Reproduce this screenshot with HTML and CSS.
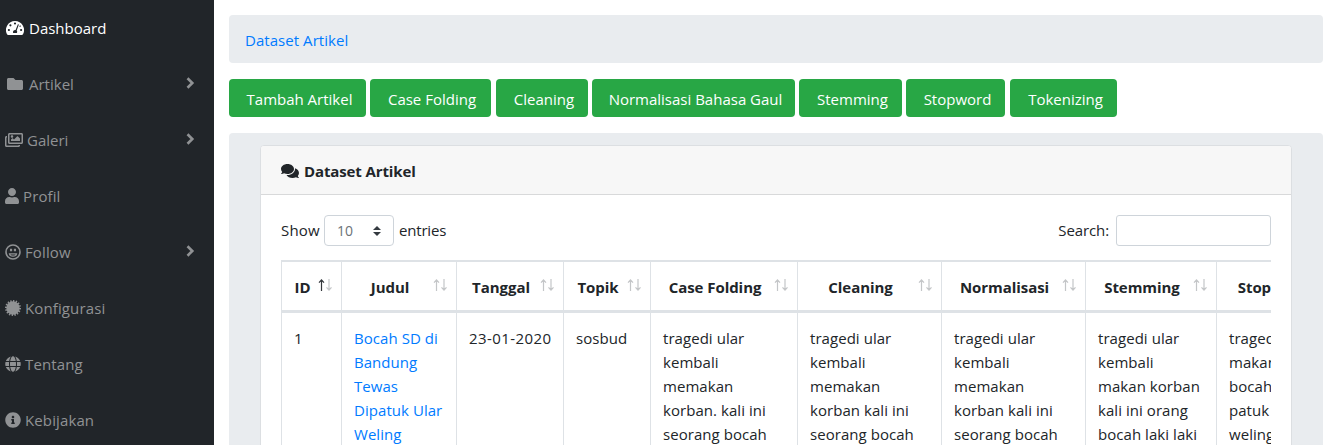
FILE: index.html
```html
<!DOCTYPE html>
<html lang="id">
<head>
<meta charset="utf-8">
<title>Dataset Artikel</title>
<link rel="stylesheet" href="styles.css">
</head>
<body>
<div class="layout">
  <nav class="sidebar">
    <a class="nav-item active"><svg class="ic-dash" width="18" height="16" viewBox="0 0 18 16"><path fill-rule="evenodd" d="M9 1a9 9 0 0 0-7.800 13.500c.2.3.5.5.9.5h13.800c.4 0 .7-.2.9-.5A9 9 0 0 0 9 1zM9 2.400a1.100 1.100 0 1 1 0 2.200 1.100 1.100 0 0 1 0-2.200zM4.400 4.200a1.100 1.100 0 1 1 0 2.200 1.100 1.100 0 0 1 0-2.200zM2.900 8.900a1.100 1.100 0 1 1 0 2.200 1.100 1.100 0 0 1 0-2.200zM15.100 8.900a1.100 1.100 0 1 1 0 2.200 1.100 1.100 0 0 1 0-2.200zM11.900 4.200l1 .4-2.200 5.900a2.200 2.200 0 0 1 .1 2.600H7.200a2.200 2.200 0 0 1 2.400-3.100zM13.900 5.300a1 1 0 0 1 .3 1.700l-.8-.1z"/></svg><span>Dashboard</span></a>
    <a class="nav-item"><svg class="ic-folder" width="16" height="16" viewBox="0 0 512 512"><path d="M464 128H272l-64-64H48C21.490 64 0 85.490 0 112v288c0 26.510 21.490 48 48 48h416c26.510 0 48-21.490 48-48V176c0-26.510-21.490-48-48-48z"/></svg><span>Artikel</span><svg class="chev" width="9" height="12" viewBox="0 0 9 12"><path d="M1.500 1.300L6.300 6l-4.800 4.700"/></svg></a>
    <a class="nav-item"><svg width="18" height="16" viewBox="0 0 576 512"><path d="M480 416v16c0 26.510-21.490 48-48 48H48c-26.510 0-48-21.490-48-48V176c0-26.510 21.490-48 48-48h16v48H54a6 6 0 0 0-6 6v244a6 6 0 0 0 6 6h372a6 6 0 0 0 6-6v-10h48zm42-336H150a6 6 0 0 0-6 6v244a6 6 0 0 0 6 6h372a6 6 0 0 0 6-6V86a6 6 0 0 0-6-6zm6-48c26.510 0 48 21.490 48 48v256c0 26.510-21.490 48-48 48H144c-26.510 0-48-21.490-48-48V80c0-26.510 21.490-48 48-48h384zM264 144c0 22.091-17.909 40-40 40s-40-17.909-40-40 17.909-40 40-40 40 17.909 40 40zm-72 96l39.515-39.515c4.686-4.686 12.284-4.686 16.971 0L288 240l103.515-103.515c4.686-4.686 12.284-4.686 16.971 0L480 208v80H192v-48z"/></svg><span>Galeri</span><svg class="chev" width="9" height="12" viewBox="0 0 9 12"><path d="M1.500 1.300L6.300 6l-4.800 4.700"/></svg></a>
    <a class="nav-item"><svg width="14" height="16" viewBox="0 0 448 512"><path d="M224 256c70.700 0 128-57.300 128-128S294.700 0 224 0 96 57.300 96 128s57.300 128 128 128zm89.600 32h-16.700c-22.200 10.200-46.900 16-72.900 16s-50.600-5.800-72.900-16h-16.700C60.200 288 0 348.200 0 422.400V464c0 26.500 21.500 48 48 48h352c26.500 0 48-21.500 48-48v-41.600c0-74.200-60.200-134.400-134.400-134.400z"/></svg><span class="spaced">Profil</span></a>
    <a class="nav-item"><svg class="ic-smile" width="16" height="16" viewBox="0 0 16 16"><circle cx="8" cy="8" r="7"/><path d="M5.500 4.700v2.600M6.600 4.700v2.600M9.400 4.700v2.600M10.500 4.700v2.600M4.400 9.900h7.200c-.5 3-6.700 3-7.200 0z"/></svg><span class="spaced">Follow</span><svg class="chev" width="9" height="12" viewBox="0 0 9 12"><path d="M1.500 1.300L6.300 6l-4.800 4.700"/></svg></a>
    <a class="nav-item"><svg class="ic-cert" width="16" height="16" viewBox="0 0 16 16"><circle cx="8" cy="8" r="6.700"/><circle class="teeth" cx="8" cy="8" r="7" pathLength="32"/></svg><span class="spaced">Konfigurasi</span></a>
    <a class="nav-item"><svg class="ic-globe" width="16" height="16" viewBox="0 0 496 512"><path d="M336.500 160C322 70.700 287.800 8 248 8s-74 62.700-88.500 152h177zM152 256c0 22.200 1.200 43.500 3.300 64h185.300c2.100-20.500 3.300-41.800 3.300-64s-1.200-43.500-3.300-64H155.300c-2.100 20.500-3.300 41.800-3.300 64zm324.700-96c-28.600-67.900-86.500-120.400-158-141.600 24.400 33.800 41.200 84.700 50 141.600h108zM177.200 18.400C105.800 39.600 47.800 92.100 19.300 160h108c8.700-56.900 25.500-107.800 49.900-141.600zM487.400 192H372.700c2.100 21 3.300 42.500 3.300 64s-1.200 43-3.300 64h114.600c5.500-20.500 8.600-41.800 8.600-64s-3.100-43.500-8.500-64zM120 256c0-21.500 1.200-43 3.300-64H8.600C3.200 212.500 0 233.800 0 256s3.200 43.500 8.600 64h114.600c-2-21-3.200-42.500-3.200-64zm39.500 96c14.500 89.300 48.700 152 88.500 152s74-62.700 88.500-152h-177zm159.300 141.600c71.400-21.200 129.400-73.700 158-141.600h-108c-8.800 56.900-25.600 107.800-50 141.600zM19.300 352c28.600 67.900 86.500 120.400 158 141.600-24.400-33.800-41.200-84.700-50-141.600h-108z"/></svg><span class="spaced">Tentang</span></a>
    <a class="nav-item"><svg width="16" height="16" viewBox="0 0 512 512"><path d="M256 8C119.043 8 8 119.083 8 256c0 136.997 111.043 248 248 248s248-111.003 248-248C504 119.083 392.957 8 256 8zm0 110c23.196 0 42 18.804 42 42s-18.804 42-42 42-42-18.804-42-42 18.804-42 42-42zm56 254c0 6.627-5.373 12-12 12h-88c-6.627 0-12-5.373-12-12v-24c0-6.627 5.373-12 12-12h12v-64h-12c-6.627 0-12-5.373-12-12v-24c0-6.627 5.373-12 12-12h64c6.627 0 12 5.373 12 12v100h12c6.627 0 12 5.373 12 12v24z"/></svg><span class="spaced">Kebijakan</span></a>
  </nav>
  <main class="content">
    <div class="breadcrumb"><a>Dataset Artikel</a></div>
    <div class="actions">
      <button class="btn w-tambah">Tambah Artikel</button>
      <button class="btn w-case">Case Folding</button>
      <button class="btn w-clean">Cleaning</button>
      <button class="btn w-normal">Normalisasi Bahasa Gaul</button>
      <button class="btn w-stem">Stemming</button>
      <button class="btn w-stop">Stopword</button>
      <button class="btn w-token">Tokenizing</button>
    </div>
    <div class="panel">
      <section class="card">
        <header class="card-header"><svg width="18" height="16" viewBox="0 0 576 512"><path d="M416 192c0-88.400-93.100-160-208-160S0 103.600 0 192c0 34.300 14.100 65.900 38 92-13.400 30.200-35.500 54.200-35.800 54.500-2.200 2.300-2.800 5.700-1.500 8.700S4.800 352 8 352c36.600 0 66.900-12.300 88.700-25 32.200 15.700 70.300 25 111.300 25 114.900 0 208-71.600 208-160zm122 220c23.900-26 38-57.700 38-92 0-66.900-53.500-124.200-129.300-148.100.9 6.600 1.300 13.300 1.300 20.100 0 105.900-107.700 192-240 192-10.800 0-21.300-.8-31.700-1.900C207.800 439.600 281.800 480 368 480c41 0 79.100-9.200 111.300-25 21.800 12.700 52.100 25 88.700 25 3.200 0 6.100-1.900 7.300-4.800 1.300-2.900.7-6.300-1.500-8.700-.3-.3-22.400-24.200-35.800-54.500z"/></svg><span>Dataset Artikel</span></header>
        <div class="card-body">
          <div class="controls">
            <span class="show">Show</span>
            <div class="select"><span>10</span><svg width="8" height="10" viewBox="0 0 8 10"><path d="M4 0L0 4h8zM4 10L0 6h8z"/></svg></div>
            <span class="entries">entries</span>
            <label class="search" for="search">Search:</label>
            <input id="search" class="search-input" type="text">
          </div>
          <div class="table-wrap">
            <table>
              <colgroup><col class="c-id"><col class="c-judul"><col class="c-tanggal"><col class="c-topik"><col class="c-case"><col class="c-text"><col class="c-text"><col class="c-stem"><col class="c-stop"></colgroup>
              <thead><tr>
                <th><div class="head"><span>ID</span><svg class="sort asc" viewBox="0 0 14 12"><path class="up" d="M3.500 12V1M1 3.700L3.500 1 6 3.700"/><path d="M11 0v11M8.500 8.300L11 11l2.500-2.700"/></svg></div></th>
                <th><div class="head"><span>Judul</span><svg class="sort" viewBox="0 0 14 12"><path d="M3.500 12V1M1 3.700L3.500 1 6 3.700M11 0v11M8.500 8.300L11 11l2.500-2.700"/></svg></div></th>
                <th><div class="head"><span>Tanggal</span><svg class="sort" viewBox="0 0 14 12"><path d="M3.500 12V1M1 3.700L3.500 1 6 3.700M11 0v11M8.500 8.300L11 11l2.500-2.700"/></svg></div></th>
                <th><div class="head"><span>Topik</span><svg class="sort" viewBox="0 0 14 12"><path d="M3.500 12V1M1 3.700L3.500 1 6 3.700M11 0v11M8.500 8.300L11 11l2.500-2.700"/></svg></div></th>
                <th><div class="head"><span>Case Folding</span><svg class="sort" viewBox="0 0 14 12"><path d="M3.500 12V1M1 3.700L3.500 1 6 3.700M11 0v11M8.500 8.300L11 11l2.500-2.700"/></svg></div></th>
                <th><div class="head"><span>Cleaning</span><svg class="sort" viewBox="0 0 14 12"><path d="M3.500 12V1M1 3.700L3.500 1 6 3.700M11 0v11M8.500 8.300L11 11l2.500-2.700"/></svg></div></th>
                <th><div class="head"><span>Normalisasi</span><svg class="sort" viewBox="0 0 14 12"><path d="M3.500 12V1M1 3.700L3.500 1 6 3.700M11 0v11M8.500 8.300L11 11l2.500-2.700"/></svg></div></th>
                <th><div class="head"><span>Stemming</span><svg class="sort" viewBox="0 0 14 12"><path d="M3.500 12V1M1 3.700L3.500 1 6 3.700M11 0v11M8.500 8.300L11 11l2.500-2.700"/></svg></div></th>
                <th><div class="head"><span>Stopword</span></div></th>
              </tr></thead>
              <tbody><tr>
                <td>1</td>
                <td><a>Bocah SD di<br>Bandung<br>Tewas<br>Dipatuk Ular<br>Weling</a></td>
                <td class="date">23-01-2020</td>
                <td>sosbud</td>
                <td>tragedi ular<br>kembali<br>memakan<br>korban. kali ini<br>seorang bocah</td>
                <td>tragedi ular<br>kembali<br>memakan<br>korban kali ini<br>seorang bocah</td>
                <td>tragedi ular<br>kembali<br>memakan<br>korban kali ini<br>seorang bocah</td>
                <td>tragedi ular<br>kembali<br>makan korban<br>kali ini orang<br>bocah laki laki</td>
                <td>tragedi<br>makan<br>bocah<br>patuk<br>weling</td>
              </tr></tbody>
            </table>
          </div>
        </div>
      </section>
    </div>
  </main>
</div>
</body>
</html>
```
FILE: styles.css
```css
* { box-sizing: border-box; }
body {
  margin: 0;
  height: 445px;
  overflow: hidden;
  background: #fff;
  color: #212529;
  font: 15px/24px "Segoe UI", "Open Sans", "Noto Sans", sans-serif;
}
a { color: #007bff; }
.layout { display: flex; height: 445px; overflow: hidden; }

/* Sidebar */
.sidebar { flex: 0 0 214px; background: #212529; overflow: hidden; }
.nav-item {
  display: flex;
  align-items: center;
  height: 56px;
  padding: 0 19px 0 5px;
  gap: 4px;
  color: #909294;
}
.nav-item.active { color: #fff; gap: 5px; }
.nav-item svg { fill: currentColor; flex: none; }
.spaced { letter-spacing: .12px; }
.ic-dash { margin-left: 1px; }
.nav-item .ic-folder { margin: 0 2px 0 2px; }
.nav-item .chev { margin: 0 0 3px auto; fill: none; stroke: currentColor; stroke-width: 2.6; }
.nav-item .ic-smile { fill: none; stroke: currentColor; stroke-width: 1.6; }
.ic-smile path { stroke-width: 1.1; }
.nav-item .ic-cert .teeth { fill: none; stroke: currentColor; stroke-width: 2; stroke-dasharray: 1 1; }

/* Content */
.content { flex: 1; min-width: 0; padding: 15px 4px 0 15px; }
.breadcrumb {
  height: 48px;
  padding: 13px 16px 11px;
  margin-bottom: 16px;
  background: #e9ecef;
  border-radius: 4px;
  letter-spacing: .05px;
}
.actions { display: flex; gap: 4px; margin-bottom: 16px; }
.btn {
  flex: none;
  height: 38px;
  padding: 2px 0 1px 4px;
  border: 0;
  border-radius: 4px;
  background: #28a745;
  color: #fff;
  font: inherit;
  text-align: center;
  white-space: nowrap;
}
.w-tambah { width: 137px; }
.w-case { width: 121px; padding-left: 3px; }
.w-clean { width: 92px; margin-left: 1px; }
.w-normal { width: 203px; }
.w-stem { width: 103px; }
.w-stop { width: 99px; }
.w-token { width: 107px; margin-left: 1px; }
.panel { height: 400px; padding: 12px 31px; background: #e9ecef; border-radius: 4px; }
.card { height: 400px; background: #fff; border: 1px solid #dcdfe2; border-radius: 4px; }
.card-header {
  display: flex;
  align-items: center;
  gap: 5px;
  height: 49px;
  padding: 2px 20px 0;
  background: #f7f7f7;
  border-bottom: 1px solid #d8d9da;
  border-radius: 3px 3px 0 0;
  font-weight: 700;
  letter-spacing: -.12px;
}
.card-header svg { fill: #212529; }
.card-body { padding: 20px; }
.controls { display: flex; align-items: center; height: 31px; margin-bottom: 14px; }
.show, .entries, .search { padding-bottom: 2px; }
.show { letter-spacing: .2px; }
.entries { letter-spacing: -.15px; }
.select {
  display: flex;
  align-items: center;
  justify-content: space-between;
  width: 70px;
  height: 31px;
  margin: 0 5px 0 4px;
  padding: 1px 12px;
  border: 1px solid #ced4da;
  border-radius: 4px;
  color: #6c7278;
  font-size: 14px;
}
.select svg { fill: #343a40; }
.search { margin-left: auto; letter-spacing: -.1px; }
.search-input { width: 155px; height: 31px; margin-left: 7px; border: 1px solid #ced4da; border-radius: 3px; background: #fff; }

/* Table */
.table-wrap { overflow: hidden; }
table { table-layout: fixed; width: 1049px; border-spacing: 0; }
.c-id { width: 60px; }
.c-judul { width: 115px; }
.c-tanggal { width: 107px; }
.c-topik { width: 87px; }
.c-case { width: 147px; }
.c-text { width: 144px; }
.c-stem { width: 131px; }
.c-stop { width: 114px; }
th, td { border-left: 1px solid #dee2e6; }
th { height: 53px; padding: 2px 9px 0 9px; border-top: 2px solid #dee2e6; border-bottom: 3px solid #dee2e6; letter-spacing: -.05px; }
td { padding: 13px 0 0 12px; vertical-align: top; text-align: left; white-space: nowrap; letter-spacing: .05px; }
.date { letter-spacing: .42px; }
.head { display: flex; align-items: center; white-space: nowrap; }
.head span { flex: 1; text-align: center; }
.sort { flex: none; width: 14px; height: 12px; margin: 0 0 5px 4px; fill: none; stroke: #c4c6c8; stroke-width: 1.2; }
.sort .up { stroke: #33373b; }
```
